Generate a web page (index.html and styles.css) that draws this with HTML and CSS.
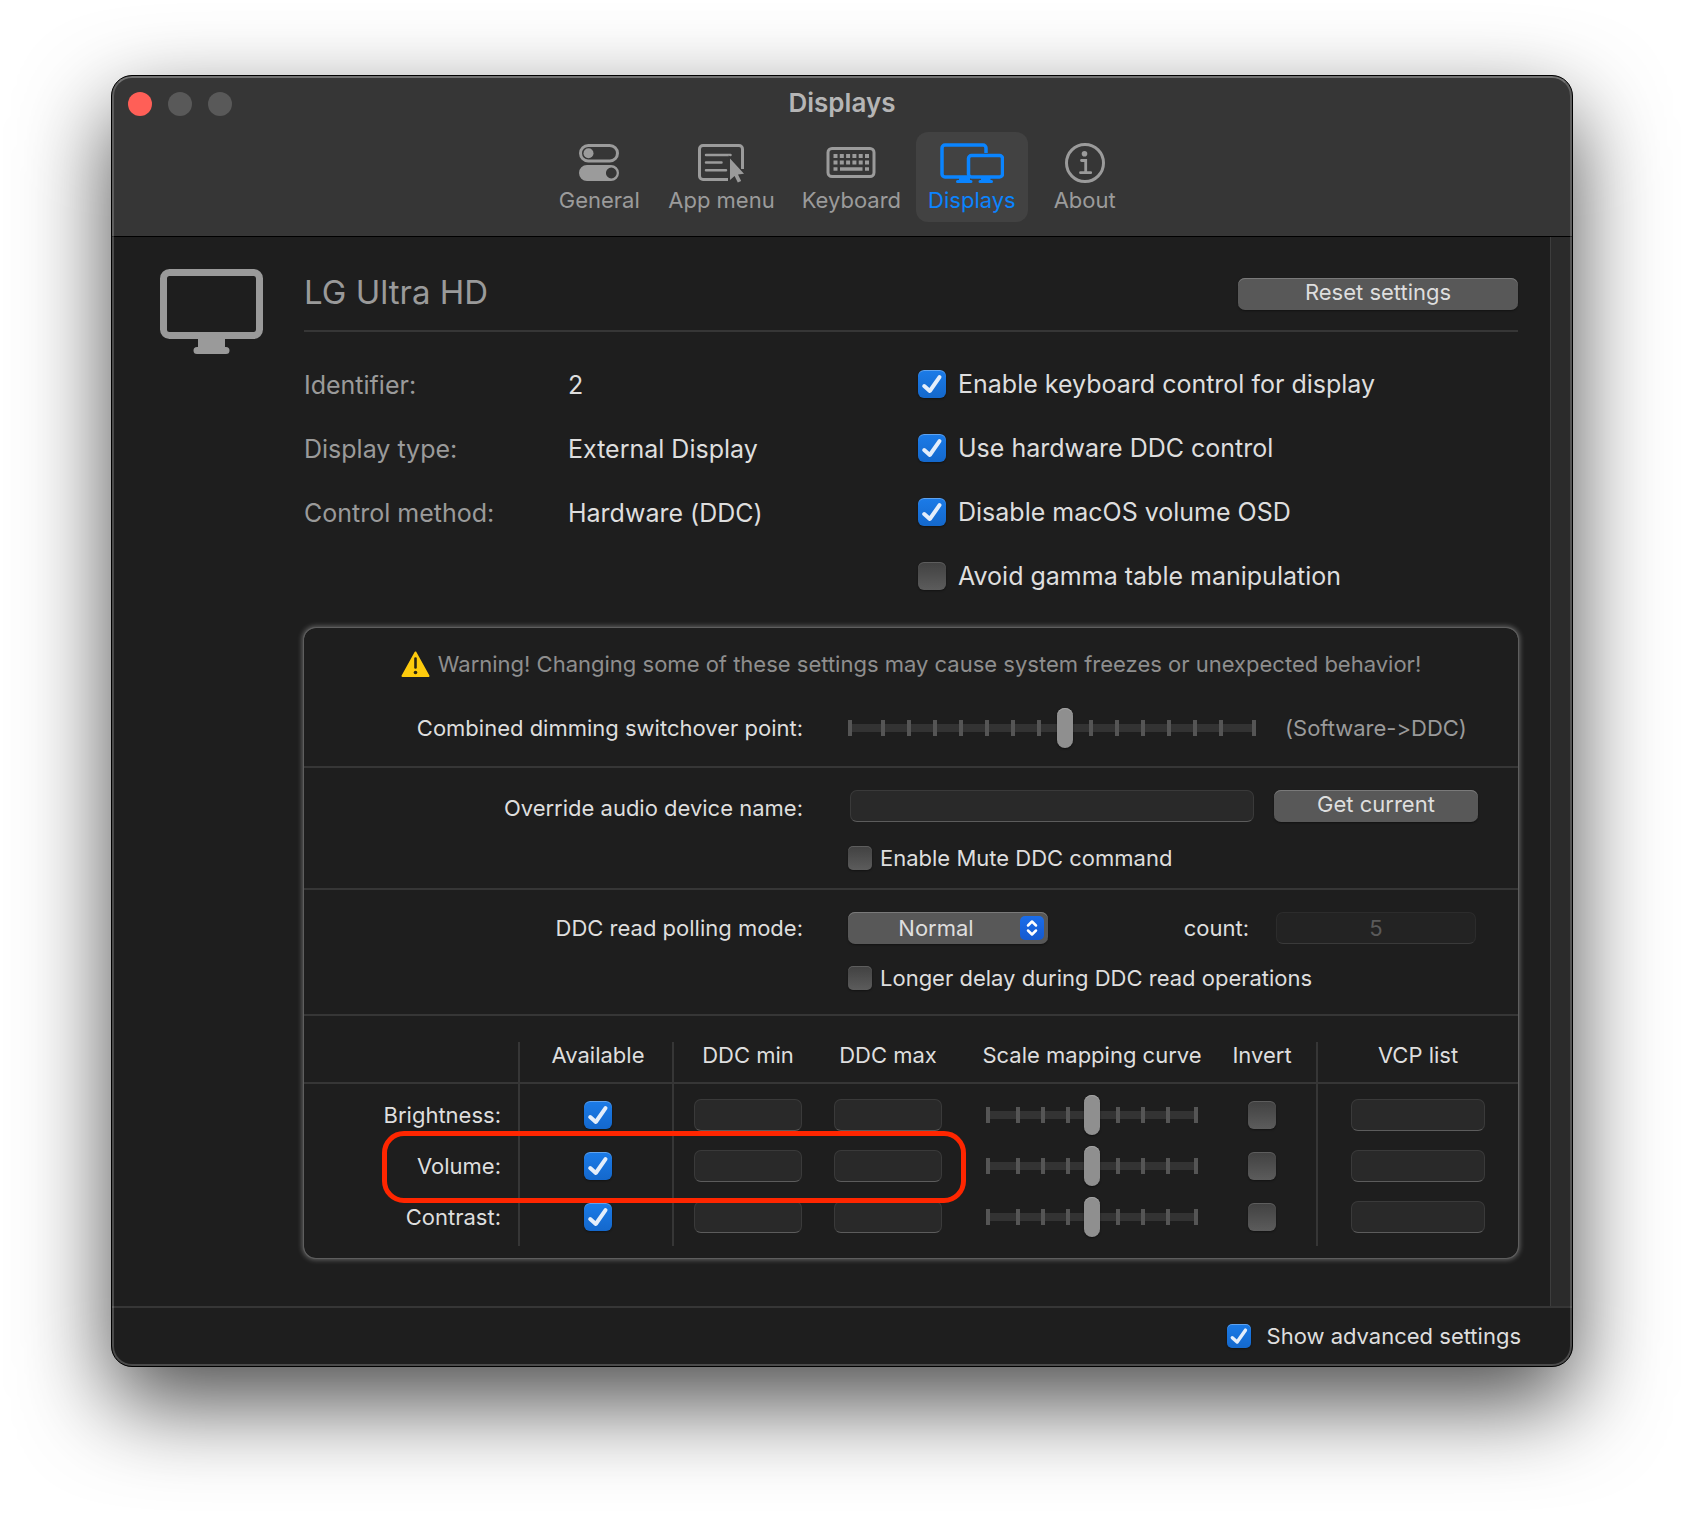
FILE: index.html
```html
<!DOCTYPE html>
<html lang="en">
<head>
    <meta charset="UTF-8">
    <meta name="viewport" content="width=device-width, initial-scale=1.0">
    <title>Displays</title>
    <link rel="stylesheet" href="styles.css">
</head>
<body>
    <div class="window">
        <header class="toolbar">
            <div class="titlebar">
                <div class="lights">
                    <button class="light close" aria-label="Close"></button>
                    <button class="light" aria-label="Minimize"></button>
                    <button class="light" aria-label="Zoom"></button>
                </div>
                <h1>Displays</h1>
            </div>
            <nav class="tabs">
                <button class="tab">
                    <svg width="40" height="40" viewBox="0 0 40 40">
                        <rect x="1.5" y="2.5" width="37" height="15.5" rx="7.75" fill="none" stroke="currentColor" stroke-width="3"/>
                        <circle cx="9.5" cy="10.2" r="5" fill="currentColor"/>
                        <path fill="currentColor" fill-rule="evenodd" d="M8 22h24a8 8 0 0 1 0 16H8a8 8 0 0 1 0-16zM32.3 24.6a5.4 5.4 0 1 0 0 10.8 5.4 5.4 0 1 0 0-10.8z"/>
                    </svg>
                    <span>General</span>
                </button>
                <button class="tab">
                    <svg width="46" height="40" viewBox="0 0 46 40">
                        <path d="M44.5 26V6a3.5 3.5 0 0 0-3.5-3.5H5A3.5 3.5 0 0 0 1.5 6v27A3.5 3.5 0 0 0 5 36.5h25" fill="none" stroke="currentColor" stroke-width="3"/>
                        <path d="M8 12h24.5M8 19.5h15.5M8 27.2h20" fill="none" stroke="currentColor" stroke-width="2.5" stroke-linecap="round"/>
                        <path d="M32 15.5v21.5l4.6-4 3.2 6.5 3.4-1.6-3.2-6.5 6-.6z" fill="currentColor" stroke="#363636" stroke-width="2.5" paint-order="stroke"/>
                    </svg>
                    <span>App menu</span>
                </button>
                <button class="tab">
                    <svg width="50" height="40" viewBox="0 0 50 40">
                        <rect x="2" y="5.5" width="46" height="28" rx="4" fill="none" stroke="currentColor" stroke-width="3"/>
                        <path d="M7.5 13h35.5M7.5 19.5h35.5" fill="none" stroke="currentColor" stroke-width="4" stroke-dasharray="4 2.3"/>
                        <path d="M7.5 26h4M14 26h22.5M39 26h4" fill="none" stroke="currentColor" stroke-width="3.5"/>
                    </svg>
                    <span>Keyboard</span>
                </button>
                <button class="tab active">
                    <svg width="64" height="40" viewBox="0 0 64 40">
                        <path d="M46 10V5a3 3 0 0 0-3-3H5a3 3 0 0 0-3 3v26a3 3 0 0 0 3 3h23" fill="none" stroke="currentColor" stroke-width="3.5"/>
                        <rect x="28.5" y="12.5" width="34" height="21.5" rx="3" fill="none" stroke="currentColor" stroke-width="3.5"/>
                        <path d="M19 34h11v3h1a1.5 1.5 0 0 1 0 3H17.5a1.5 1.5 0 0 1 0-3H19zM41 34h9.5v3h1a1.5 1.5 0 0 1 0 3H40a1.5 1.5 0 0 1 0-3h1z" fill="currentColor"/>
                    </svg>
                    <span>Displays</span>
                </button>
                <button class="tab">
                    <svg width="40" height="40" viewBox="0 0 40 40">
                        <circle cx="20" cy="20" r="18.5" fill="none" stroke="currentColor" stroke-width="3"/>
                        <circle cx="19.5" cy="10.8" r="2.8" fill="currentColor"/>
                        <path d="M16.5 17.5h4.2v12M15.5 29.7h10.2" fill="none" stroke="currentColor" stroke-width="2.8" stroke-linecap="round"/>
                    </svg>
                    <span>About</span>
                </button>
            </nav>
        </header>

        <div class="body">
            <main class="content">
                <svg class="monitor" width="103" height="86" viewBox="0 0 103 86">
                    <rect x="3.5" y="3.5" width="96" height="63" rx="6" fill="none" stroke="currentColor" stroke-width="7"/>
                    <path d="M38 68h27v10h1a3.5 3.5 0 0 1 0 7H37a3.5 3.5 0 0 1 0-7h1z" fill="currentColor"/>
                </svg>
                <div class="display">
                    <div class="display-head">
                        <h2>LG Ultra HD</h2>
                        <button class="btn reset">Reset settings</button>
                    </div>

                    <div class="info">
                        <dl class="facts">
                            <dt>Identifier:</dt>
                            <dd>2</dd>
                            <dt>Display type:</dt>
                            <dd>External Display</dd>
                            <dt>Control method:</dt>
                            <dd>Hardware (DDC)</dd>
                        </dl>
                        <div class="options">
                            <label class="check large"><input type="checkbox" checked>Enable keyboard control for display</label>
                            <label class="check large"><input type="checkbox" checked>Use hardware DDC control</label>
                            <label class="check large"><input type="checkbox" checked>Disable macOS volume OSD</label>
                            <label class="check large"><input type="checkbox">Avoid gamma table manipulation</label>
                        </div>
                    </div>

                    <div class="panel">
                        <section class="dimming">
                            <p class="warning">
                                <svg width="29" height="26" viewBox="0 0 29 26">
                                    <path d="M14.5 1.5L27.5 25h-26z" fill="#fecb0d" stroke="#fecb0d" stroke-width="2" stroke-linejoin="round"/>
                                    <path d="M14.5 7.5v9" stroke="#2a2413" stroke-width="2.6" stroke-linecap="round"/>
                                    <circle cx="14.5" cy="21.5" r="1.8" fill="#2a2413"/>
                                </svg>
                                Warning! Changing some of these settings may cause system freezes or unexpected behavior!
                            </p>
                            <div class="row">
                                <label class="name" for="switchover">Combined dimming switchover point:</label>
                                <input class="slider wide" type="range" id="switchover" min="0" max="15" value="8">
                                <span class="hint">(Software-&gt;DDC)</span>
                            </div>
                        </section>

                        <section class="audio">
                            <div class="row">
                                <label class="name" for="audioName">Override audio device name:</label>
                                <input class="field inset" type="text" id="audioName">
                                <button class="btn">Get current</button>
                            </div>
                            <div class="row">
                                <label class="check second"><input type="checkbox">Enable Mute DDC command</label>
                            </div>
                        </section>

                        <section class="polling">
                            <div class="row">
                                <label class="name" for="pollingMode">DDC read polling mode:</label>
                                <div class="mode">
                                    <div class="select">
                                        <select id="pollingMode">
                                            <option>Normal</option>
                                        </select>
                                        <svg width="24" height="24" viewBox="0 0 24 24">
                                            <path d="M8 9.5l4-4 4 4M8 14.5l4 4 4-4" fill="none" stroke="#fff" stroke-width="2.5" stroke-linecap="round" stroke-linejoin="round"/>
                                        </svg>
                                    </div>
                                    <label for="pollCount">count:</label>
                                </div>
                                <input class="field count" type="text" id="pollCount" value="5" disabled>
                            </div>
                            <div class="row">
                                <label class="check second"><input type="checkbox">Longer delay during DDC read operations</label>
                            </div>
                        </section>

                        <table>
                            <colgroup>
                                <col>
                                <col class="c-available">
                                <col class="c-min">
                                <col class="c-max">
                                <col class="c-curve">
                                <col class="c-invert">
                                <col class="c-vcp">
                            </colgroup>
                            <thead>
                                <tr>
                                    <td class="ruled"></td>
                                    <th class="ruled available">Available</th>
                                    <th class="min">DDC min</th>
                                    <th class="max">DDC max</th>
                                    <th>Scale mapping curve</th>
                                    <th class="ruled invert">Invert</th>
                                    <th>VCP list</th>
                                </tr>
                            </thead>
                            <tbody>
                                <tr>
                                    <th class="ruled">Brightness:</th>
                                    <td class="ruled available"><input type="checkbox" class="box" aria-label="Brightness available" checked></td>
                                    <td class="min"><input type="text" class="field" aria-label="Brightness DDC min"></td>
                                    <td class="max"><input type="text" class="field" aria-label="Brightness DDC max"></td>
                                    <td><input type="range" class="slider" aria-label="Brightness curve" min="0" max="8" value="4"></td>
                                    <td class="ruled invert"><input type="checkbox" class="box" aria-label="Brightness invert"></td>
                                    <td><input type="text" class="field vcp" aria-label="Brightness VCP list"></td>
                                </tr>
                                <tr class="volume">
                                    <th class="ruled">Volume:<span class="marker"></span></th>
                                    <td class="ruled available"><input type="checkbox" class="box" aria-label="Volume available" checked></td>
                                    <td class="min"><input type="text" class="field" aria-label="Volume DDC min"></td>
                                    <td class="max"><input type="text" class="field" aria-label="Volume DDC max"></td>
                                    <td><input type="range" class="slider" aria-label="Volume curve" min="0" max="8" value="4"></td>
                                    <td class="ruled invert"><input type="checkbox" class="box" aria-label="Volume invert"></td>
                                    <td><input type="text" class="field vcp" aria-label="Volume VCP list"></td>
                                </tr>
                                <tr>
                                    <th class="ruled">Contrast:</th>
                                    <td class="ruled available"><input type="checkbox" class="box" aria-label="Contrast available" checked></td>
                                    <td class="min"><input type="text" class="field" aria-label="Contrast DDC min"></td>
                                    <td class="max"><input type="text" class="field" aria-label="Contrast DDC max"></td>
                                    <td><input type="range" class="slider" aria-label="Contrast curve" min="0" max="8" value="4"></td>
                                    <td class="ruled invert"><input type="checkbox" class="box" aria-label="Contrast invert"></td>
                                    <td><input type="text" class="field vcp" aria-label="Contrast VCP list"></td>
                                </tr>
                            </tbody>
                        </table>
                    </div>
                </div>
            </main>
            <div class="scroller"></div>
        </div>

        <footer class="footer">
            <label class="check advanced"><input type="checkbox" checked>Show advanced settings</label>
        </footer>
    </div>
</body>
</html>
```
FILE: styles.css
```css
* {
    box-sizing: border-box;
}

body {
    margin: 0;
    padding: 75px 111px 147px;
    background-color: white;
    color: #dedede;
    font-family: Inter, "Liberation Sans", sans-serif;
    font-size: 22px;
    line-height: 24px;
    font-variant-ligatures: no-contextual;
}

h1, h2, p, dl, dd {
    margin: 0;
}

button, input, select {
    font: inherit;
    color: inherit;
    margin: 0;
}

svg {
    display: block;
    flex: none;
}

.window {
    position: relative;
    border: 1px solid black;
    border-radius: 21px;
    overflow: hidden;
    background-color: #1e1e1e;
    box-shadow: 0 36px 90px rgba(0, 0, 0, 0.7);
}

/* light rim inside the black outline */
.window::after {
    content: "";
    position: absolute;
    inset: 0;
    border: 2px solid rgba(255, 255, 255, 0.2);
    border-top-color: rgba(255, 255, 255, 0.3);
    border-radius: 20px;
    pointer-events: none;
}

/* Toolbar */
.toolbar {
    padding-bottom: 14px;
    background-color: #363636;
    border-bottom: 1px solid black;
    color: #9b9b9b;
}

.titlebar {
    display: grid;
    grid-template-columns: 1fr auto 1fr;
    align-items: center;
    height: 56px;
    padding: 0 16px;
}

.titlebar h1 {
    padding-bottom: 2px;
    font-size: 26px;
    font-weight: 600;
    color: #b5b5b5;
}

.lights {
    display: flex;
    gap: 16px;
}

.light {
    width: 24px;
    height: 24px;
    padding: 0;
    border: none;
    border-radius: 50%;
    background-color: #595959;
}

.light.close {
    background-color: #ff5f57;
}

.tabs {
    display: flex;
    justify-content: center;
    gap: 3px;
}

.tab {
    display: flex;
    flex-direction: column;
    align-items: center;
    gap: 5px;
    min-width: 108px;
    height: 90px;
    padding: 11px 12px 8px;
    border: none;
    border-radius: 12px;
    background: none;
}

.tab.active {
    background-color: #424242;
    color: #0a84ff;
}

/* Content */
.body {
    display: flex;
}

.content {
    flex: 1;
    display: flex;
    align-items: flex-start;
    gap: 41px;
    padding: 32px 32px 48px 48px;
}

.scroller {
    width: 22px;
    background-color: #2b2b2b;
    border-left: 1px solid #3d3d3d;
}

.monitor {
    color: #9a9a9a;
}

.display {
    flex: 1;
    min-width: 0;
}

.display-head {
    display: flex;
    align-items: center;
    justify-content: space-between;
    height: 63px;
    padding: 9px 0 20px;
    border-bottom: 2px solid #363636;
}

.display-head h2 {
    padding-bottom: 4px;
    font-size: 33px;
    font-weight: 400;
    color: #9a9a9a;
}

.btn {
    height: 32px;
    padding: 0 0 4px;
    border: none;
    border-radius: 7px;
    background-color: #585858;
    box-shadow: inset 0 1px #7a7a7a, 0 1px 2px rgba(0, 0, 0, 0.4);
    line-height: 28px;
}

.btn.reset {
    width: 280px;
}

.info {
    display: grid;
    grid-template-columns: 614px 1fr;
    margin: 36px 0;
    font-size: 25px;
    line-height: 32px;
}

.facts {
    display: grid;
    grid-template-columns: 264px 1fr;
    gap: 32px 0;
    align-content: start;
    padding-top: 1px;
}

.facts dt {
    color: #9a9a9a;
}

.options {
    display: flex;
    flex-direction: column;
    gap: 32px;
}

/* Controls */
.check {
    display: flex;
    align-items: center;
    gap: 8px;
    white-space: nowrap;
}

.check.large {
    gap: 12px;
}

.check.advanced {
    gap: 16px;
}

input[type="checkbox"] {
    appearance: none;
    display: block;
    flex: none;
    width: 24px;
    height: 24px;
    border-radius: 5px;
    background: linear-gradient(#414141, #5c5c5c);
    box-shadow: inset 0 1px rgba(255, 255, 255, 0.15), 0 1px 2px rgba(0, 0, 0, 0.4);
}

.check.large input,
.box[type="checkbox"] {
    width: 28px;
    height: 28px;
    border-radius: 6px;
}

input[type="checkbox"]:checked {
    background: url("data:image/svg+xml,%3Csvg xmlns='http://www.w3.org/2000/svg' viewBox='0 0 28 28'%3E%3Cpath d='M6.2 16l5.6 5L21.5 7.2' fill='none' stroke='%23e4eefb' stroke-width='4' stroke-linecap='round' stroke-linejoin='round'/%3E%3C/svg%3E") center / 100% 100% no-repeat, linear-gradient(#1b7be8, #1468cc);
    box-shadow: inset 0 1px rgba(255, 255, 255, 0.3), 0 1px 2px rgba(0, 0, 0, 0.4);
}

.box {
    margin: 0 auto;
}

.field {
    display: block;
    width: 100%;
    height: 32px;
    padding: 0 8px;
    border: 1px solid #3a3a3a;
    border-bottom-color: #5c5c5c;
    border-radius: 7px;
    background-color: #292929;
}

.field:disabled {
    border-color: #2c2c2c;
    border-bottom-color: #3a3a3a;
    background-color: #232323;
    color: #5a5a5a;
    text-align: center;
}

/* the two end ticks sit a little further out than the inner ones */
.slider {
    --tick: #555;
    appearance: none;
    display: block;
    width: 212px;
    height: 40px;
    margin: 0 auto;
    background:
        linear-gradient(var(--tick), var(--tick)) left center / 4px 16px no-repeat,
        linear-gradient(var(--tick), var(--tick)) right center / 4px 16px no-repeat,
        repeating-linear-gradient(90deg, var(--tick) 0 4px, transparent 4px 25px) 30px center / 154px 16px no-repeat,
        linear-gradient(#333, #333) center / 100% 8px no-repeat;
}

.slider.wide {
    width: 100%;
    background:
        linear-gradient(var(--tick), var(--tick)) left center / 4px 16px no-repeat,
        linear-gradient(var(--tick), var(--tick)) right center / 4px 16px no-repeat,
        repeating-linear-gradient(90deg, var(--tick) 0 4px, transparent 4px 26px) 33px center / 342px 16px no-repeat,
        linear-gradient(#333, #333) center / 100% 8px no-repeat;
}

.slider::-webkit-slider-thumb {
    appearance: none;
    width: 16px;
    height: 40px;
    border-radius: 8px;
    background-color: #8f8f8f;
    box-shadow: inset 0 1px #a5a5a5, 0 1px 2px rgba(0, 0, 0, 0.5);
}

.select {
    position: relative;
    width: 200px;
}

.select select {
    appearance: none;
    display: block;
    width: 100%;
    height: 32px;
    padding: 0 24px 0 0;
    border: none;
    border-radius: 7px;
    background-color: #585858;
    box-shadow: inset 0 1px #7a7a7a, 0 1px 2px rgba(0, 0, 0, 0.4);
    text-align: center;
    text-align-last: center;
}

.select svg {
    position: absolute;
    top: 4px;
    right: 4px;
    border-radius: 5px;
    background: linear-gradient(#1a6dea, #155ad0);
    pointer-events: none;
}

/* Advanced panel */
.panel {
    padding-bottom: 12px;
    border-radius: 12px;
    box-shadow: 0 0 0 1px #5e5e5e, 0 0 5px 2px rgba(255, 255, 255, 0.3);
}

.panel section {
    display: flex;
    flex-direction: column;
    border-bottom: 2px solid #363636;
}

.panel .dimming {
    gap: 28px;
    padding: 20px 0 18px;
}

.panel .audio {
    gap: 24px;
    padding: 22px 0 18px;
}

.panel .polling {
    gap: 22px;
    padding: 22px 0 24px;
}

.warning {
    display: flex;
    align-items: center;
    justify-content: center;
    gap: 8px;
    height: 32px;
    color: #8e8e8e;
}

.row {
    display: grid;
    grid-template-columns: minmax(0, 1fr) 408px 204px;
    align-items: center;
    column-gap: 18px;
    padding-right: 40px;
}

.row .name {
    padding-right: 27px;
    text-align: right;
}

.audio .name {
    padding-top: 4px;
}

.row .second {
    grid-column: 2 / 4;
}

.hint {
    padding-left: 11px;
    color: #9a9a9a;
}

.field.inset {
    width: auto;
    margin: 0 2px;
}

.field.count {
    width: 200px;
    margin-left: 2px;
}

.mode {
    display: flex;
    align-items: center;
    justify-content: space-between;
    padding-right: 7px;
}

/* Table */
table {
    width: 100%;
    margin-top: 26px;
    table-layout: fixed;
    border-collapse: separate;
    border-spacing: 0;
}

.c-available { width: 154px; }
.c-min { width: 140px; }
.c-max { width: 148px; }
.c-curve { width: 260px; }
.c-invert { width: 96px; }
.c-vcp { width: 200px; }

th, td {
    padding: 0;
    font-weight: 400;
    text-align: center;
    white-space: nowrap;
}

thead th, thead td {
    height: 42px;
    padding-bottom: 14px;
    border-bottom: 2px solid #363636;
}

tbody tr {
    height: 52px;
}

tbody tr:first-child > * {
    height: 56px;
    padding-top: 6px;
}

tbody tr:last-child > * {
    height: 54px;
    padding-bottom: 4px;
}

tbody th {
    padding-right: 17px;
    text-align: right;
}

.ruled {
    border-right: 2px solid #363636;
}

.available {
    padding-left: 4px;
}

.min {
    padding-left: 20px;
    padding-right: 12px;
}

.max {
    padding-left: 20px;
    padding-right: 20px;
}

.invert {
    padding-right: 14px;
}

.vcp {
    width: 134px;
    margin: 0 auto;
}

.volume {
    position: relative;
}

.marker {
    position: absolute;
    top: -9px;
    bottom: -11px;
    left: 78px;
    width: 584px;
    border: 5px solid #ff2600;
    border-radius: 22px;
    pointer-events: none;
}

/* Footer */
.footer {
    display: flex;
    justify-content: flex-end;
    padding: 16px 51px 18px;
    border-top: 2px solid #363636;
}
```
